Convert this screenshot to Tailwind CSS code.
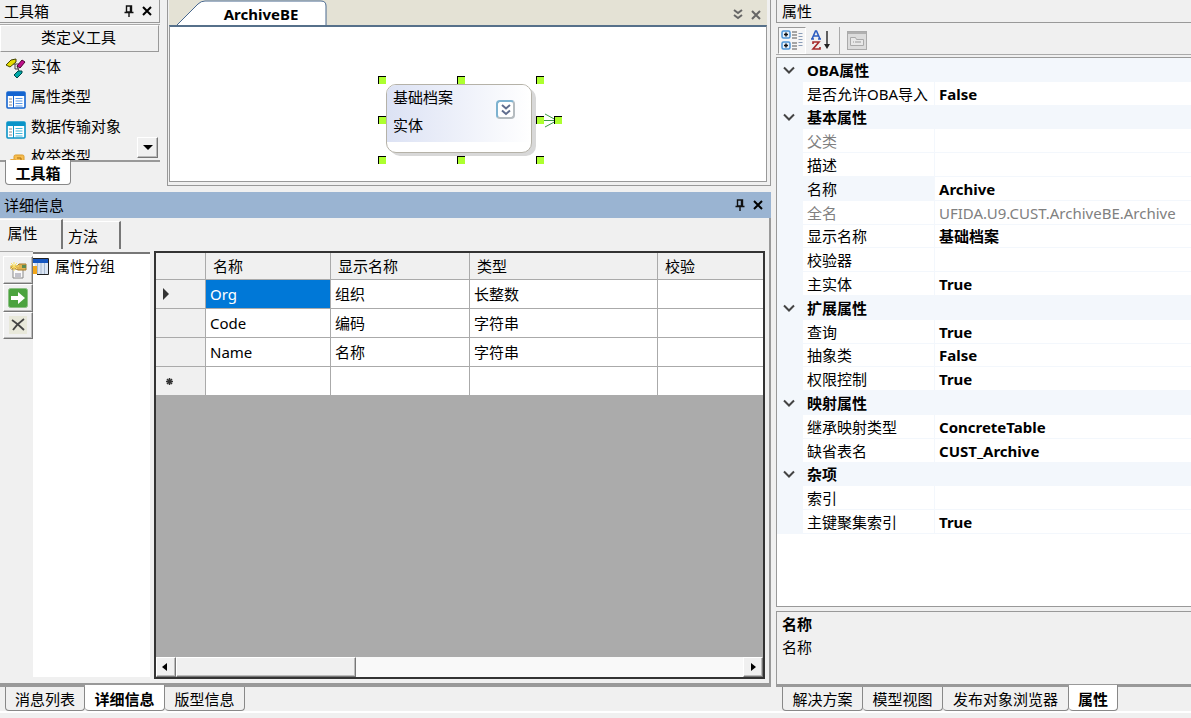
<!DOCTYPE html>
<html lang="zh-CN">
<head>
<meta charset="utf-8">
<title>ArchiveBE</title>
<script src="https://cdn.jsdelivr.net/npm/@tailwindcss/browser@4"></script>
</head>
<body class="flex min-h-screen flex-col bg-[#f0f0f0] font-['Noto_Sans','Noto_Sans_CJK_SC',sans-serif] text-[15px] leading-5 text-black">
<svg class="hidden">
  <symbol id="pin" viewBox="0 0 10 12"><path d="M2.5 1h5v6h-5zM0.5 7.5h9M5 8v4M6.5 1v6" fill="none" stroke="#111" stroke-width="1.4"/></symbol>
  <symbol id="close" viewBox="0 0 10 10"><path d="M1 1l8 8M9 1L1 9" fill="none" stroke="currentColor" stroke-width="2"/></symbol>
  <symbol id="chevron" viewBox="0 0 12 8"><path d="M1 1.5l5 5 5-5" fill="none" stroke="#444" stroke-width="2"/></symbol>
</svg>
<main class="flex flex-1 gap-[5px]">
  <div class="flex min-w-0 flex-1 flex-col">
    <div class="flex h-[186px] gap-[7px]">
      <!-- toolbox -->
      <section class="flex w-40 shrink-0 flex-col">
        <header class="flex h-[23px] items-center border-r border-b border-[#999] pr-[7px] pb-px pl-1">
          <h2 class="flex-1">工具箱</h2>
          <button aria-label="固定" class="mr-2"><svg class="h-3 w-2.5"><use href="#pin"/></svg></button>
          <button aria-label="关闭"><svg class="size-[10px]"><use href="#close"/></svg></button>
        </header>
        <div class="relative mt-px h-[138px] overflow-hidden border-t border-b-2 border-t-[#aaa] border-b-[#999]">
          <button class="block h-[27px] w-[159px] border border-t-white border-r-[#999] border-b-[#999] border-l-white pr-0.5 pb-1">类定义工具</button>
          <ul>
            <li><button class="flex h-[30px] items-center gap-[5px] pb-0.5 pl-1.5"><svg class="mt-1 size-5" viewBox="0 0 20 20"><path d="M7 6h6M9 6v5h4M11 8l2 5" stroke="#444" fill="none"/><path d="M0 7l5-5 5-1v3L4 9z" fill="#e5dd00" stroke="#444400"/><path d="M11 8l5-6 3 2-5 6z" fill="#c0108c" stroke="#500030"/><path d="M8 17l4-4h4v2l-5 5z" fill="#00a8a8" stroke="#004848"/></svg>实体</button></li>
            <li><button class="flex h-[30px] items-center gap-[5px] pb-0.5 pl-1.5"><svg class="mt-2 h-[18px] w-5" viewBox="0 0 20 18"><rect x="1" y="1" width="18" height="16" rx="1" fill="#fff" stroke="#1565d0" stroke-width="1.6"/><path d="M1 1h18v4H1z" fill="#1565d0"/><path d="M7.5 5v12" stroke="#1565d0"/><path d="M3 8h3M3 11h3M3 14h3" stroke="#888"/><path d="M9.500 7.500h7M9.500 10h7M9.500 12.500h7M9.500 15h7" stroke="#5b9be8"/></svg>属性类型</button></li>
            <li><button class="flex h-[30px] items-center gap-[5px] pb-0.5 pl-1.5"><svg class="mt-2 h-[18px] w-5" viewBox="0 0 20 18"><rect x="1" y="1" width="18" height="16" rx="1" fill="#fff" stroke="#0a94c8" stroke-width="1.6"/><path d="M1 1h18v4H1z" fill="#0a94c8"/><path d="M7.500 5v12" stroke="#0a94c8"/><path d="M3 8h3M3 11h3M3 14h3" stroke="#888"/><path d="M9.500 7.500h7M9.500 10h7M9.500 12.500h7M9.500 15h7" stroke="#45b8dc"/></svg>数据传输对象</button></li>
            <li><button class="flex h-[30px] items-center gap-[5px] pb-0.5 pl-1.5"><svg class="mt-2 size-5" viewBox="0 0 20 20"><rect x="8" y="5" width="10" height="10" rx="1.500" fill="#f7bd4f" stroke="#d99a2b"/><path d="M11 8h4v3h-4" stroke="#a86d10" fill="none"/><path d="M1 12l4-3h5v6H1z" fill="#e7a83e"/></svg>枚举类型</button></li>
          </ul>
          <button aria-label="向下滚动" class="absolute right-0.5 bottom-0.5 flex size-[21px] items-center justify-center border border-t-white border-r-[#777] border-b-[#777] border-l-white bg-[#f0f0f0] shadow-[inset_-1px_-1px_#bbb]"><svg class="h-[5px] w-2.5" viewBox="0 0 10 5"><path d="M0 0h10L5 5z"/></svg></button>
        </div>
        <button class="relative -mt-0.5 ml-[5px] h-[25px] w-[66px] rounded-b border border-t-0 border-[#888] bg-white pt-0.5 font-bold">工具箱</button>
      </section>
      <!-- diagram document -->
      <section class="flex min-w-0 flex-1 flex-col border border-t-0 border-[#999] pr-[3px] pb-[3px] pl-px">
        <div class="flex h-[25px] items-center bg-[#e4e2d5] pr-1.5">
          <button class="relative h-[25px] w-[158px] pt-0.5 pl-[26px] font-bold"><svg class="absolute inset-0 size-full" viewBox="0 0 158 25" preserveAspectRatio="none"><path d="M8 25L29 4Q32 1 36 1H152Q157 1 157 6V25" fill="#fff" stroke="#48688f"/></svg><span class="relative">ArchiveBE</span></button>
          <span class="flex-1"></span>
          <button aria-label="文档列表" class="mt-1 mr-2"><svg class="h-[11px] w-2.5" viewBox="0 0 10 11"><path d="M1 1l4 3 4-3M1 6l4 3 4-3" fill="none" stroke="#666" stroke-width="2"/></svg></button>
          <button aria-label="关闭文档" class="mt-1 text-[#666]"><svg class="size-[10px]"><use href="#close"/></svg></button>
        </div>
        <div class="relative flex-1 border border-t-2 border-[#999] border-t-[#56708a] bg-white">
          <!-- entity node on the free canvas -->
          <div class="absolute top-[61px] left-[220px] h-[68px] w-[146px] rounded-[10px] bg-[#d8d8d8]"></div>
          <div class="absolute top-[57px] left-[216px] h-[69px] w-[146px] overflow-hidden rounded-[10px] border border-[#b5b2a8] bg-white">
            <div class="h-[57px] bg-linear-to-r from-[#dce2f4] to-white pl-1.5">
              <p class="h-7 leading-6">基础档案</p>
              <p class="leading-6">实体</p>
            </div>
          </div>
          <button aria-label="折叠" class="absolute top-[73px] left-[326px] flex size-[19px] items-center justify-center rounded border-2 border-[#b5bcc0] border-t-[#7db2d0] border-l-[#7db2d0] bg-white"><svg class="h-3 w-2.5" viewBox="0 0 10 12"><path d="M1 1l4 3.500 4-3.500M1 6.500l4 3.500 4-3.500" fill="none" stroke="#5f6d8e" stroke-width="2"/></svg></button>
          <svg class="absolute top-[86px] left-[373px] h-[15px] w-[16px]" viewBox="0 0 16 15"><path d="M0 7.500h14M2 1l12 6.500L2 14" fill="none" stroke="#3c9a46"/></svg>
          <i class="absolute top-[49px] left-[208px] size-2 border-t border-l border-black bg-[#adff2f]"></i>
          <i class="absolute top-[49px] left-[287px] size-2 border-t border-l border-black bg-[#adff2f]"></i>
          <i class="absolute top-[49px] left-[366px] size-2 border-t border-l border-black bg-[#adff2f]"></i>
          <i class="absolute top-[89px] left-[208px] size-2 border-t border-l border-black bg-[#adff2f]"></i>
          <i class="absolute top-[89px] left-[366px] size-2 border-t border-l border-black bg-[#adff2f]"></i>
          <i class="absolute top-[89px] left-[384px] size-2 border-t border-l border-black bg-[#adff2f]"></i>
          <i class="absolute top-[129px] left-[208px] size-2 border-t border-l border-black bg-[#adff2f]"></i>
          <i class="absolute top-[129px] left-[287px] size-2 border-t border-l border-black bg-[#adff2f]"></i>
          <i class="absolute top-[129px] left-[366px] size-2 border-t border-l border-black bg-[#adff2f]"></i>
        </div>
      </section>
    </div>
    <!-- details -->
    <header class="mt-1.5 flex h-[26px] items-center bg-[#9ab4d2] pr-2 pl-1">
      <h2 class="flex-1">详细信息</h2>
      <button aria-label="固定" class="mr-2"><svg class="h-3 w-2.5"><use href="#pin"/></svg></button>
      <button aria-label="关闭"><svg class="size-[10px]"><use href="#close"/></svg></button>
    </header>
    <section class="flex flex-1 flex-col border-r-2 border-b-4 border-[#999] pr-1 pb-1">
      <div class="flex h-[33px] items-end pb-0.5">
        <button class="h-[30px] w-[63px] border-t border-r-2 border-t-white border-r-[#777] pr-4 pb-1">属性</button>
        <button class="h-7 w-[58px] border-t border-r-2 border-t-white border-r-[#777] pr-4">方法</button>
      </div>
      <div class="flex flex-1">
        <div class="flex w-[33px] shrink-0 flex-col border-t border-[#aaa] pt-1 pl-[3px]">
          <button aria-label="新建" class="flex h-7 items-center justify-center border border-t-white border-r-[#777] border-b-[#777] border-l-white pr-px shadow-[inset_-1px_-1px_#bbb]"><svg class="size-[18px]" viewBox="0 0 18 18"><path d="M4 7h10v10H4z" fill="#fafafa" stroke="#888"/><path d="M6 13h6M6 15h6" stroke="#889"/><path d="M2 5h6l2-2h7v6H9L7 8H2z" fill="#e2b350" stroke="#a67c2e"/><path d="M5 1v9M1 5h9M2 2l6 6M8 2L2 8" stroke="#fbe36b"/><path d="M13 4h4v3h-4z" fill="#5c8a4f"/></svg></button>
          <button aria-label="转到" class="flex h-7 items-center justify-center border border-t-white border-r-[#777] border-b-[#777] border-l-white pr-px shadow-[inset_-1px_-1px_#bbb]"><svg class="size-5" viewBox="0 0 20 20"><rect x=".5" y=".5" width="19" height="19" rx="2" fill="#4ba33f" stroke="#8cc084"/><path d="M3 8h7V4l7 6-7 6v-4H3z" fill="#fff"/></svg></button>
          <button aria-label="删除" class="flex h-[27px] items-center justify-center border border-t-white border-r-[#777] border-b-[#777] border-l-white pr-px pb-0.5 shadow-[inset_-1px_-1px_#bbb]"><svg class="size-[18px] bg-[#e8e8da]" viewBox="0 0 18 18"><path d="M3 4q6 4 12 10M15 3Q8 8 4 14" fill="none" stroke="#444" stroke-width="1.800"/></svg></button>
        </div>
        <div class="mt-px mb-0.5 w-[117px] shrink-0 border-t-2 border-t-[#777] bg-white">
          <button class="flex h-6 items-center gap-1.5"><svg class="h-[17px] w-4" viewBox="0 0 16 17"><path d="M0 .5h15.500v16H4" fill="#dbe5f3" stroke="#222"/><path d="M0 1h15v4H0z" fill="#1556c0"/><path d="M4.500 5v11M8 5v11M11.500 5v11" stroke="#a6b8d0"/><path d="M0 8h4v8H0z" fill="#f2a71b"/></svg>属性分组</button>
        </div>
        <div class="ml-1 flex min-w-0 flex-1 flex-col border-2 border-[#333] bg-[#ababab]">
          <table class="w-full table-fixed border-separate border-spacing-0 text-left">
            <colgroup><col class="w-[50px]"><col class="w-[125px]"><col class="w-[139px]"><col class="w-[188px]"><col></colgroup>
            <thead class="bg-[#f0f0f0]">
              <tr class="h-[27px]"><th class="border-r border-b border-[#aaa]"></th><th class="border-r border-b border-[#aaa] pl-[7px] font-normal">名称</th><th class="border-r border-b border-[#aaa] pl-[7px] font-normal">显示名称</th><th class="border-r border-b border-[#aaa] pl-[7px] font-normal">类型</th><th class="border-b border-[#aaa] pl-[7px] font-normal">校验</th></tr>
            </thead>
            <tbody class="bg-white">
              <tr class="h-[29px]"><th class="border-r border-b border-[#aaa] bg-[#f0f0f0] pl-[7px]"><svg class="h-3 w-1.5" viewBox="0 0 6 12"><path d="M0 0l6 6-6 6z" fill="#333"/></svg></th><td class="border-r border-b border-[#aaa] bg-[#0078d7] pl-1 text-white">Org</td><td class="border-r border-b border-[#aaa] pl-1">组织</td><td class="border-r border-b border-[#aaa] pl-1">长整数</td><td class="border-b border-[#aaa]"></td></tr>
              <tr class="h-[29px]"><th class="border-r border-b border-[#aaa] bg-[#f0f0f0]"></th><td class="border-r border-b border-[#aaa] pl-1">Code</td><td class="border-r border-b border-[#aaa] pl-1">编码</td><td class="border-r border-b border-[#aaa] pl-1">字符串</td><td class="border-b border-[#aaa]"></td></tr>
              <tr class="h-[29px]"><th class="border-r border-b border-[#aaa] bg-[#f0f0f0]"></th><td class="border-r border-b border-[#aaa] pl-1">Name</td><td class="border-r border-b border-[#aaa] pl-1">名称</td><td class="border-r border-b border-[#aaa] pl-1">字符串</td><td class="border-b border-[#aaa]"></td></tr>
              <tr class="h-7"><th class="border-r border-[#aaa] bg-[#f0f0f0] pl-2.5"><svg class="size-[7px]" viewBox="0 0 7 7"><path d="M3.500 0v7M0 3.500h7M1 1l5 5M6 1L1 6" stroke="#333" stroke-width="1.500"/></svg></th><td class="border-r border-[#aaa]"></td><td class="border-r border-[#aaa]"></td><td class="border-r border-[#aaa]"></td><td></td></tr>
            </tbody>
          </table>
          <div class="mt-auto flex h-5 bg-[#f9f9f9]">
            <button aria-label="向左滚动" class="flex w-5 items-center justify-center border border-t-white border-r-[#777] border-b-[#777] border-l-white bg-[#f0f0f0] pr-1 shadow-[inset_-1px_-1px_#bbb]"><svg class="h-2 w-[5px]" viewBox="0 0 5 8"><path d="M5 0v8L0 4z"/></svg></button>
            <div class="w-[180px] border border-t-white border-r-[#777] border-b-[#777] border-l-white bg-[#f0f0f0] shadow-[inset_-1px_-1px_#bbb]"></div>
            <button aria-label="向右滚动" class="ml-auto flex w-5 items-center justify-center border border-t-white border-r-[#777] border-b-[#777] border-l-white bg-[#f0f0f0] shadow-[inset_-1px_-1px_#bbb]"><svg class="h-2 w-[5px]" viewBox="0 0 5 8"><path d="M0 0v8l5-4z"/></svg></button>
          </div>
        </div>
      </div>
    </section>
    <nav class="flex h-6 pl-[5px]">
      <button class="w-20 rounded-b border border-t-0 border-[#888]">消息列表</button>
      <button class="relative -mt-0.5 w-20 rounded-b border border-t-0 border-l-0 border-[#888] bg-white pt-0.5 font-bold">详细信息</button>
      <button class="w-20 rounded-b border border-t-0 border-l-0 border-[#888]">版型信息</button>
    </nav>
  </div>

  <!-- property grid -->
  <section class="flex w-[415px] shrink-0 flex-col">
    <header class="flex h-[23px] items-center border-b border-l border-[#999] pl-[5px]"><h2>属性</h2></header>
    <div class="mt-[3px] flex h-[29px] items-center border-b border-[#aaa] pl-0.5">
      <button aria-label="按分类顺序" class="flex h-[27px] w-7 items-center justify-center border border-r-white border-b-white border-t-[#999] border-l-[#999] bg-[#f6f6f6]"><svg class="h-5 w-[22px]" viewBox="0 0 22 20"><rect x="1" y="1" width="8" height="7" rx="1.500" fill="#e7f2fc" stroke="#4e95d6" stroke-width="1.500"/><rect x="1" y="12" width="8" height="7" rx="1.500" fill="#e7f2fc" stroke="#4e95d6" stroke-width="1.500"/><path d="M3 4.500h4M5 2.500v4M3 15.500h4M5 13.500v4" stroke="#111" stroke-width="1.500"/><path d="M11 2h5M11 5h5M11 8h5M11 13h5M11 16h5M11 19h5" stroke="#555"/><path d="M17.500 3.500h4M17.500 6.500h4M17.500 9.500h4M17.500 12.500h4M17.500 15.500h4" stroke="#8a9db8"/></svg></button>
      <button aria-label="按字母顺序" class="flex h-[27px] w-[34px] items-center justify-center pr-1"><svg class="h-5 w-5" viewBox="0 0 20 20"><path d="M1 9l3.500-8h1L9 9M2.500 6h5M0 9h3M7 9h3" fill="none" stroke="#2c5cc0" stroke-width="1.600"/><path d="M2 14v-2h6L2 19h7v-2" fill="none" stroke="#a52a2a" stroke-width="1.600"/><path d="M16 1v15" stroke="#222" stroke-width="1.400"/><path d="M13 14h6l-3 5z" fill="#222"/></svg></button>
      <span class="-ml-px h-[27px] w-px bg-[#aaa]"></span>
      <button aria-label="属性页" disabled class="ml-[7px]"><svg class="h-[19px] w-5" viewBox="0 0 20 19"><rect x=".5" y=".5" width="19" height="18" fill="#dcdcdc" stroke="#aaa"/><path d="M1 2h18" stroke="#b0b0b0" stroke-width="2"/><path d="M3.500 14.500v-8h5l1 2h7v6z" fill="#e8e8e8" stroke="#aaa"/><path d="M6 11h1M8 11h6" stroke="#999"/></svg></button>
    </div>
    <div class="mt-0.5 flex-1 border border-r-0 border-[#999] bg-white">
      <table class="h-[476px] w-full table-fixed border-separate border-spacing-0 text-left">
        <colgroup><col class="w-[26px]"><col class="w-[132px]"><col></colgroup>
        <tbody>
          <tr class="bg-[#f3f7fc]"><td class="pl-1.5"><button aria-label="折叠 OBA属性" class="block"><svg class="h-2 w-3"><use href="#chevron"/></svg></button></td><th colspan="2" class="border-b border-[#f3f7fc] pt-px pl-1">OBA属性</th></tr>
          <tr><td class="bg-[#f3f7fc]"></td><th class="border-r border-b border-[#f3f7fc] pt-px pl-1 font-normal whitespace-nowrap">是否允许OBA导入</th><td class="border-b border-[#f3f7fc] pt-px pl-1 font-bold">False</td></tr>
          <tr class="bg-[#f3f7fc]"><td class="pl-1.5"><button aria-label="折叠 基本属性" class="block"><svg class="h-2 w-3"><use href="#chevron"/></svg></button></td><th colspan="2" class="border-b border-[#f3f7fc] pt-px pl-1">基本属性</th></tr>
          <tr><td class="bg-[#f3f7fc]"></td><th class="border-r border-b border-[#f3f7fc] pt-px pl-1 font-normal text-[#808080]">父类</th><td class="border-b border-[#f3f7fc] pt-px pl-1"></td></tr>
          <tr><td class="bg-[#f3f7fc]"></td><th class="border-r border-b border-[#f3f7fc] pt-px pl-1 font-normal">描述</th><td class="border-b border-[#f3f7fc] pt-px pl-1"></td></tr>
          <tr><td class="bg-[#f3f7fc]"></td><th class="border-r border-b border-[#f3f7fc] bg-[#f3f7fc] pt-px pl-1 font-normal">名称</th><td class="border-b border-[#f3f7fc] pt-px pl-1 font-bold">Archive</td></tr>
          <tr><td class="bg-[#f3f7fc]"></td><th class="border-r border-b border-[#f3f7fc] pt-px pl-1 font-normal text-[#808080]">全名</th><td class="border-b border-[#f3f7fc] pt-px pl-1 whitespace-nowrap text-[#808080]">UFIDA.U9.CUST.ArchiveBE.Archive</td></tr>
          <tr><td class="bg-[#f3f7fc]"></td><th class="border-r border-b border-[#f3f7fc] pt-px pl-1 font-normal">显示名称</th><td class="border-b border-[#f3f7fc] pt-px pl-1 font-bold">基础档案</td></tr>
          <tr><td class="bg-[#f3f7fc]"></td><th class="border-r border-b border-[#f3f7fc] pt-px pl-1 font-normal">校验器</th><td class="border-b border-[#f3f7fc] pt-px pl-1"></td></tr>
          <tr><td class="bg-[#f3f7fc]"></td><th class="border-r border-b border-[#f3f7fc] pt-px pl-1 font-normal">主实体</th><td class="border-b border-[#f3f7fc] pt-px pl-1 font-bold">True</td></tr>
          <tr class="bg-[#f3f7fc]"><td class="pl-1.5"><button aria-label="折叠 扩展属性" class="block"><svg class="h-2 w-3"><use href="#chevron"/></svg></button></td><th colspan="2" class="border-b border-[#f3f7fc] pt-px pl-1">扩展属性</th></tr>
          <tr><td class="bg-[#f3f7fc]"></td><th class="border-r border-b border-[#f3f7fc] pt-px pl-1 font-normal">查询</th><td class="border-b border-[#f3f7fc] pt-px pl-1 font-bold">True</td></tr>
          <tr><td class="bg-[#f3f7fc]"></td><th class="border-r border-b border-[#f3f7fc] pt-px pl-1 font-normal">抽象类</th><td class="border-b border-[#f3f7fc] pt-px pl-1 font-bold">False</td></tr>
          <tr><td class="bg-[#f3f7fc]"></td><th class="border-r border-b border-[#f3f7fc] pt-px pl-1 font-normal">权限控制</th><td class="border-b border-[#f3f7fc] pt-px pl-1 font-bold">True</td></tr>
          <tr class="bg-[#f3f7fc]"><td class="pl-1.5"><button aria-label="折叠 映射属性" class="block"><svg class="h-2 w-3"><use href="#chevron"/></svg></button></td><th colspan="2" class="border-b border-[#f3f7fc] pt-px pl-1">映射属性</th></tr>
          <tr><td class="bg-[#f3f7fc]"></td><th class="border-r border-b border-[#f3f7fc] pt-px pl-1 font-normal">继承映射类型</th><td class="border-b border-[#f3f7fc] pt-px pl-1 font-bold">ConcreteTable</td></tr>
          <tr><td class="bg-[#f3f7fc]"></td><th class="border-r border-b border-[#f3f7fc] pt-px pl-1 font-normal">缺省表名</th><td class="border-b border-[#f3f7fc] pt-px pl-1 font-bold">CUST_Archive</td></tr>
          <tr class="bg-[#f3f7fc]"><td class="pl-1.5"><button aria-label="折叠 杂项" class="block"><svg class="h-2 w-3"><use href="#chevron"/></svg></button></td><th colspan="2" class="border-b border-[#f3f7fc] pt-px pl-1">杂项</th></tr>
          <tr><td class="bg-[#f3f7fc]"></td><th class="border-r border-b border-[#f3f7fc] pt-px pl-1 font-normal">索引</th><td class="border-b border-[#f3f7fc] pt-px pl-1"></td></tr>
          <tr><td class="bg-[#f3f7fc]"></td><th class="border-r border-b border-[#f3f7fc] pt-px pl-1 font-normal">主键聚集索引</th><td class="border-b border-[#f3f7fc] pt-px pl-1 font-bold">True</td></tr>
        </tbody>
      </table>
    </div>
    <div class="mt-1 h-[76px] border-t border-b-[3px] border-l border-[#999] pt-px pl-[5px]">
      <h3 class="leading-[22px] font-bold">名称</h3>
      <p class="leading-6">名称</p>
    </div>
    <nav class="flex h-6 pl-1.5">
      <button class="w-[81px] rounded-b border border-t-0 border-[#888]">解决方案</button>
      <button class="w-20 rounded-b border border-t-0 border-l-0 border-[#888]">模型视图</button>
      <button class="w-[126px] rounded-b border border-t-0 border-l-0 border-[#888]">发布对象浏览器</button>
      <button class="relative -mt-0.5 w-[49px] rounded-b border border-t-0 border-l-0 border-[#888] bg-white pt-0.5 font-bold">属性</button>
    </nav>
  </section>
</main>
<footer class="h-[7px] border-t-2 border-white"></footer>
</body>
</html>
